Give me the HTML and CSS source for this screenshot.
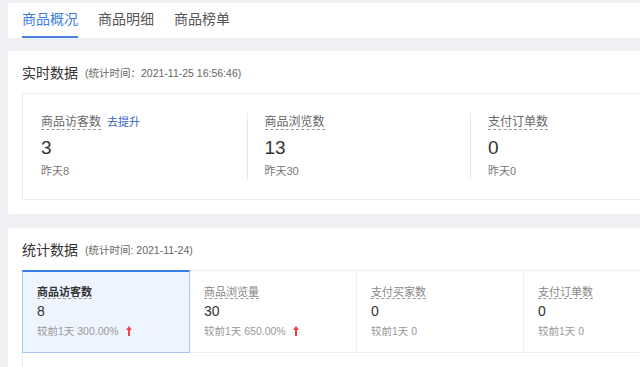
FILE: index.html
```html
<!DOCTYPE html>
<html lang="zh">
<head>
    <meta charset="UTF-8">
    <meta name="viewport" content="width=device-width, initial-scale=1.0">
    <title>商品概况</title>
    <link rel="stylesheet" href="styles.css">
</head>
<body>
    <div class="page">
        <div class="tabs">
            <div class="tab active">商品概况</div>
            <div class="tab">商品明细</div>
            <div class="tab">商品榜单</div>
        </div>

        <div class="panel">
            <div class="panel-title">
                <span class="title-text">实时数据</span>
                <span class="title-sub">(统计时间：2021-11-25 16:56:46)</span>
            </div>
            <div class="rt-card">
                <div class="rt-item">
                    <div class="rt-label"><span class="dashed">商品访客数</span><a class="rt-link">去提升</a></div>
                    <div class="rt-value">3</div>
                    <div class="rt-prev">昨天8</div>
                </div>
                <div class="rt-item">
                    <div class="rt-label"><span class="dashed">商品浏览数</span></div>
                    <div class="rt-value">13</div>
                    <div class="rt-prev">昨天30</div>
                </div>
                <div class="rt-item">
                    <div class="rt-label"><span class="dashed">支付订单数</span></div>
                    <div class="rt-value">0</div>
                    <div class="rt-prev">昨天0</div>
                </div>
            </div>
        </div>

        <div class="panel panel-last">
            <div class="panel-title">
                <span class="title-text">统计数据</span>
                <span class="title-sub">(统计时间: 2021-11-24)</span>
            </div>
            <div class="stat-grid">
                <div class="stat-card active">
                    <div class="stat-label"><span class="dashed">商品访客数</span></div>
                    <div class="stat-value">8</div>
                    <div class="stat-compare">较前1天 300.00%
                        <svg class="up" viewBox="0 0 6 10" width="6" height="10"><path d="M3 0 L6 4 L4 4 L4 10 L2 10 L2 4 L0 4 Z" fill="#f2414a"/></svg>
                    </div>
                </div>
                <div class="stat-card">
                    <div class="stat-label"><span class="dashed">商品浏览量</span></div>
                    <div class="stat-value">30</div>
                    <div class="stat-compare">较前1天 650.00%
                        <svg class="up" viewBox="0 0 6 10" width="6" height="10"><path d="M3 0 L6 4 L4 4 L4 10 L2 10 L2 4 L0 4 Z" fill="#f2414a"/></svg>
                    </div>
                </div>
                <div class="stat-card">
                    <div class="stat-label"><span class="dashed">支付买家数</span></div>
                    <div class="stat-value">0</div>
                    <div class="stat-compare">较前1天 0</div>
                </div>
                <div class="stat-card">
                    <div class="stat-label"><span class="dashed">支付订单数</span></div>
                    <div class="stat-value">0</div>
                    <div class="stat-compare">较前1天 0</div>
                </div>
            </div>
            <div class="chart-box"></div>
        </div>
    </div>
</body>
</html>
```

FILE: styles.css
```css
body {
    margin: 0;
    background-color: #eff0f4;
    font-family: 'Liberation Sans', 'Noto Sans CJK SC', sans-serif;
    color: #333;
    overflow: hidden;
}

.page {
    width: 1000px;
    padding: 3px 0 0 8px;
}

.tabs {
    display: flex;
    height: 35px;
    background-color: #fff;
    padding-left: 14px;
    gap: 20px;
}

.tab {
    font-size: 14px;
    line-height: 33px;
    color: #555;
    border-bottom: 2px solid transparent;
}

.tab.active {
    color: #3b7de6;
    border-bottom-color: #4a80e2;
}

.panel {
    background-color: #fff;
    margin-top: 13px;
    padding: 9px 0 14px 14px;
}

.panel-title {
    display: flex;
    align-items: center;
    height: 24px;
    margin-bottom: 9px;
}

.title-text {
    font-size: 14px;
    color: #333;
}

.title-sub {
    font-size: 10.5px;
    color: #666;
    margin-left: 7px;
}

.rt-card {
    display: flex;
    border: 1px solid #ebedf0;
    padding: 19px 0 20px;
}

.rt-item {
    width: 223.5px;
    height: 66px;
    box-sizing: border-box;
    padding-left: 17px;
    border-left: 1px solid #e8e9ec;
}

.rt-item:first-child {
    border-left-color: transparent;
}

.rt-label {
    font-size: 12px;
    line-height: 18px;
    color: #666;
}

.dashed {
    border-bottom: 1px dashed #999;
}

.rt-link {
    font-size: 11px;
    color: #2f5fc4;
    margin-left: 6px;
}

.rt-value {
    font-size: 19px;
    line-height: 30px;
    margin-top: 2px;
    color: #333;
}

.rt-prev {
    font-size: 11px;
    line-height: 16px;
    color: #777;
}

.panel-last {
    margin-top: 14px;
    padding-bottom: 0;
}

.stat-grid {
    display: flex;
}

.stat-card {
    width: 168px;
    height: 83px;
    box-sizing: border-box;
    padding: 12px 0 0 14px;
    border: 1px solid #eceef1;
    margin-left: -1px;
}

.stat-card:first-child {
    margin-left: 0;
}

.stat-card.active {
    background-color: #eef5fe;
    border-color: #a9c5f2;
    border-top: 2px solid #3b7be8;
    padding-top: 11px;
    position: relative;
}

.stat-label {
    font-size: 11px;
    line-height: 18px;
    color: #888;
}

.stat-card.active .stat-label {
    color: #333;
    font-weight: bold;
}

.stat-value {
    font-size: 14px;
    line-height: 20px;
    color: #333;
}

.stat-compare {
    font-size: 10.5px;
    line-height: 20px;
    color: #999;
}

.up {
    margin-left: 4px;
    vertical-align: -1px;
}

.chart-box {
    height: 60px;
    border-left: 1px solid #eceef1;
    border-right: 1px solid #eceef1;
}
```
